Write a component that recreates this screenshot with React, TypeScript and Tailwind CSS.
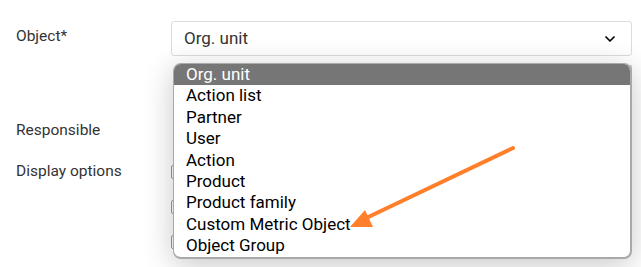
import { ChevronDown } from "lucide-react";

const options = [
  "Org. unit",
  "Action list",
  "Partner",
  "User",
  "Action",
  "Product",
  "Product family",
  "Custom Metric Object",
  "Object Group",
];

const App = () => {
  return (
    <div className="relative w-[641px] h-[267px] overflow-hidden bg-white font-['Roboto',sans-serif] text-[#333]">
      <div className="flex flex-col pl-4 pr-[9px] pt-[21px]">
        <div className="flex">
          <label className="w-[155px] pt-[5px] text-[15.5px] leading-[20px]">Object*</label>
          <div className="flex-1 h-[35px] flex items-center justify-between pl-[12px] pr-[13px] border border-[#dcdcdc] rounded-[3px] bg-white">
            <span className="text-[17px] text-[#333]">Org. unit</span>
            <ChevronDown size={16} strokeWidth={2.6} className="text-black" />
          </div>
        </div>

        <div className="flex mt-[9px]">
          <div className="w-[155px]" />
          <div className="flex-1 h-[20px] border-r-2 border-[#d0d0d0]" />
        </div>

        <div className="flex mt-[14px]">
          <label className="w-[155px] pt-[21px] text-[15.5px] leading-[20px]">Responsible</label>
          <div className="flex-1 h-[54px] border-r-2 border-[#d0d0d0]" />
        </div>

        <div className="flex mt-[8px]">
          <label className="w-[155px] text-[15.5px] leading-[20px]">Display options</label>
          <div className="flex flex-col gap-[21px] pt-[4px]">
            <div className="w-[14px] h-[14px] border border-[#999] rounded-[2px]" />
            <div className="w-[14px] h-[14px] border border-[#999] rounded-[2px]" />
            <div className="w-[14px] h-[14px] border border-[#999] rounded-[2px]" />
          </div>
        </div>
      </div>

      <div className="absolute left-[173px] top-[63px] w-[459px] overflow-hidden rounded-[8px] border border-[#a9a9a9] border-r-2 border-b-2 bg-white shadow-[0_6px_30px_rgba(0,0,0,0.22)]">
        {options.map((option, i) => (
          <div
            key={option}
            className={`h-[21.4px] pl-[12px] text-[17px] leading-[21.4px] ${
              i === 0 ? "bg-[#767676] text-white" : "text-black"
            }`}
          >
            {option}
          </div>
        ))}
      </div>

      <svg className="absolute left-0 top-0" width="641" height="267" viewBox="0 0 641 267">
        <line x1="513" y1="148" x2="362" y2="220" stroke="#ff7f2a" strokeWidth="4" strokeLinecap="round" />
        <polygon points="350,227 365,210 373,227" fill="#ff7f2a" />
      </svg>
    </div>
  );
};

export default App;
